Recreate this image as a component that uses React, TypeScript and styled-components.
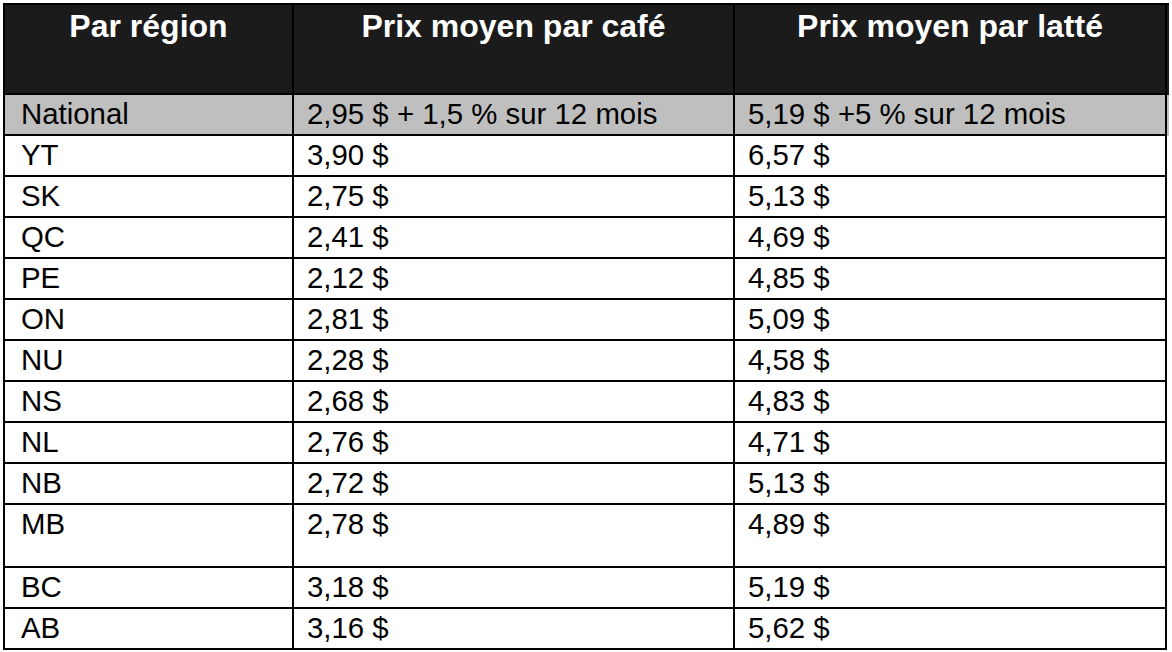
import React from 'react';
import styled, { createGlobalStyle } from 'styled-components';

const GlobalStyle = createGlobalStyle`
  html, body {
    margin: 0;
    padding: 0;
    background: #ffffff;
  }
  body {
    font-family: "Liberation Sans", Arial, Helvetica, sans-serif;
    color: #000000;
  }
`;

const Table = styled.div`
    margin: 3px 0 0 3px;
    width: 1164px;
    border-left: 2px solid #000;
    border-top: 2px solid #000;
    display: flex;
    flex-direction: column;
  `,
  Row = styled.div<{ $height: number; $bg: string }>`
    display: grid;
    grid-template-columns: 289px 441px 432px;
    height: ${(p) => p.$height}px;
    background-color: ${(p) => p.$bg};
  `,
  HeadCell = styled.div`
    box-sizing: border-box;
    border-right: 2px solid #000;
    border-bottom: 2px solid #000;
    padding-top: 3px;
    text-align: center;
    color: #ffffff;
    font-weight: 700;
    font-size: 32px;
    line-height: 36px;
    white-space: nowrap;
  `,
  Cell = styled.div<{ $first?: boolean }>`
    box-sizing: border-box;
    border-right: 2px solid #000;
    border-bottom: 2px solid #000;
    padding: 3px 0 0 ${(p) => (p.$first ? 16 : 13)}px;
    font-size: 29.4px;
    line-height: 32px;
    white-space: nowrap;
  `;

interface PriceRow {
  region: string;
  coffee: string;
  latte: string;
  tall?: boolean;
}

const rows: PriceRow[] = [
  { region: 'YT', coffee: '3,90 $', latte: '6,57 $' },
  { region: 'SK', coffee: '2,75 $', latte: '5,13 $' },
  { region: 'QC', coffee: '2,41 $', latte: '4,69 $' },
  { region: 'PE', coffee: '2,12 $', latte: '4,85 $' },
  { region: 'ON', coffee: '2,81 $', latte: '5,09 $' },
  { region: 'NU', coffee: '2,28 $', latte: '4,58 $' },
  { region: 'NS', coffee: '2,68 $', latte: '4,83 $' },
  { region: 'NL', coffee: '2,76 $', latte: '4,71 $' },
  { region: 'NB', coffee: '2,72 $', latte: '5,13 $' },
  { region: 'MB', coffee: '2,78 $', latte: '4,89 $', tall: true },
  { region: 'BC', coffee: '3,18 $', latte: '5,19 $' },
  { region: 'AB', coffee: '3,16 $', latte: '5,62 $' },
];

export default function App(): JSX.Element {
  return (
    <>
      <GlobalStyle />
      <Table>
        <Row $height={90} $bg="#1b1b1b">
          <HeadCell>Par région</HeadCell>
          <HeadCell>Prix moyen par café</HeadCell>
          <HeadCell>Prix moyen par latté</HeadCell>
        </Row>
        <Row $height={41} $bg="#bfbfbf">
          <Cell $first>National</Cell>
          <Cell>2,95 $ + 1,5 % sur 12 mois</Cell>
          <Cell>5,19 $ +5 % sur 12 mois</Cell>
        </Row>
        {rows.map((r) => (
          <Row key={r.region} $height={r.tall ? 63 : 41} $bg="#ffffff">
            <Cell $first>{r.region}</Cell>
            <Cell>{r.coffee}</Cell>
            <Cell>{r.latte}</Cell>
          </Row>
        ))}
      </Table>
    </>
  );
}
